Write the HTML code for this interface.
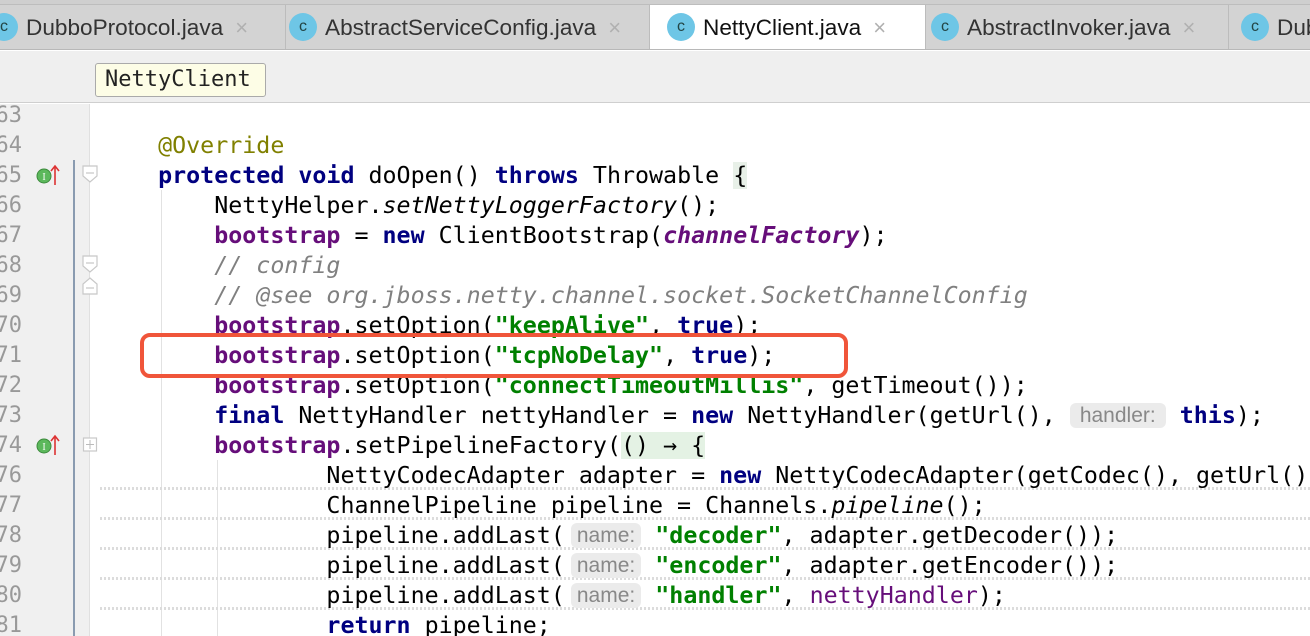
<!DOCTYPE html>
<html><head><meta charset="utf-8"><style>
*{margin:0;padding:0;box-sizing:border-box}
html,body{width:1310px;height:636px;overflow:hidden}
body{background:#fff;position:relative;font-family:"DejaVu Sans Mono","Liberation Mono",monospace}
.tabs{position:absolute;left:0;top:0;width:1310px;height:50px;background:#d3d3d3;border-bottom:1px solid #b8b8b8;overflow:hidden}
.strip{position:absolute;left:0;top:0;width:1310px;height:5px;background:#cfcfcf;border-bottom:1px solid #bdbdbd}
.tab{position:absolute;top:5px;height:45px;font-family:"Liberation Sans",sans-serif;font-size:22.6px;color:#333;line-height:45px;border-right:1px solid #bcbcbc;white-space:nowrap;overflow:hidden}
.tab.act{background:#fff;color:#111}
.ci{display:inline-block;width:28px;height:28px;border-radius:50%;background:#6ec6e6;color:#244;font-size:16px;line-height:28px;text-align:center;vertical-align:middle;margin-right:8px;position:relative;top:-2px}
.x{color:#b0b0b0;margin-left:12px;font-size:22px}
.bc{position:absolute;left:0;top:51px;width:1310px;height:52px;background:#efefef;border-bottom:1px solid #cfcfcf}
.tip{position:absolute;left:95px;top:63px;width:171px;height:34px;background:#fdfde6;border:1px solid #aaa;border-radius:3px;font-size:22px;line-height:32px;padding-left:9px;color:#222}
.gut{position:absolute;left:0;top:104px;width:90px;height:532px;background:#f0f0f0;border-right:1px solid #e0e0e0}
.ln{position:absolute;left:-20px;width:42px;text-align:right;font-size:22px;color:#999;height:30px;line-height:30px}
.code{position:absolute;left:102px;height:30px;line-height:32px;font-size:23.3px;white-space:pre;color:#000;width:1208px;overflow:hidden}
.k{color:#000080;font-weight:bold}
.f{color:#660e7a;font-weight:bold}
.fi{color:#660e7a;font-weight:bold;font-style:italic}
.s{color:#008000;font-weight:bold}
.c{color:#808080;font-style:italic}
.a{color:#808000}
.i{font-style:italic}
.h{display:inline-block;background:#ebebeb;color:#888;font-family:"Liberation Sans",sans-serif;font-size:21px;line-height:25px;height:25px;border-radius:6px;padding:0 4px;vertical-align:1px}
.wv{position:absolute;left:100px;width:1210px;height:3px;background:repeating-linear-gradient(90deg,#dcdcdc 0 2px,transparent 2px 4px)}
.g{position:absolute;width:1px;background:#e2e2e2}
</style></head><body>
<div class="tabs"><div class="strip"></div>
<div class="tab" style="left:-10px;width:296px;padding-left:0"><span class="ci">c</span>DubboProtocol.java<span class="x">×</span></div>
<div class="tab" style="left:286px;width:364px;padding-left:3px"><span class="ci">c</span>AbstractServiceConfig.java<span class="x">×</span></div>
<div class="tab act" style="left:650px;width:276px;padding-left:17px"><span class="ci">c</span>NettyClient.java<span class="x">×</span></div>
<div class="tab" style="left:926px;width:303px;padding-left:5px"><span class="ci">c</span>AbstractInvoker.java<span class="x">×</span></div>
<div class="tab" style="left:1229px;width:100px;padding-left:12px;border:none"><span class="ci">c</span>Dubbo</div>
</div>
<div class="bc"></div>
<div class="tip">NettyClient</div>
<div class="gut"></div>
<div style="position:absolute;left:73px;top:160px;width:2px;height:476px;background:#8a9bb0"></div>
<div class="g" style="left:161px;top:190px;height:446px"></div>
<div class="g" style="left:217px;top:460px;height:176px"></div>
<svg style="position:absolute;left:80px;top:160px" width="22" height="320"><g fill="#fff" stroke="#c8c8c8" stroke-width="1.2">
<path d="M3 6h14v10l-7 6-7-6z"/><path d="M3 96h14v10l-7 6-7-6z"/><path d="M10 118l7 6v10H3v-10z"/><rect x="3.5" y="278" width="13" height="13"/></g>
<g stroke="#bbb"><path d="M6 13h8M6 103h8M6 128h8M6 284.5h8M10 280v9"/></g></svg>
<svg style="position:absolute;left:35px;top:163px" width="30" height="24"><circle cx="9" cy="13" r="7" fill="#5cb85c" stroke="#3c8a3c"/><text x="9" y="17" font-size="10" text-anchor="middle" fill="#fff" font-family="Liberation Serif">I</text><path d="M20 22V4M16 8l4-5 4 5" stroke="#d33" stroke-width="1.6" fill="none"/></svg>
<svg style="position:absolute;left:35px;top:433px" width="30" height="24"><circle cx="9" cy="13" r="7" fill="#5cb85c" stroke="#3c8a3c"/><text x="9" y="17" font-size="10" text-anchor="middle" fill="#fff" font-family="Liberation Serif">I</text><path d="M20 22V4M16 8l4-5 4 5" stroke="#d33" stroke-width="1.6" fill="none"/></svg>

<div class="ln" style="top:101px">63</div><div class="ln" style="top:131px">64</div><div class="ln" style="top:161px">65</div><div class="ln" style="top:191px">66</div><div class="ln" style="top:221px">67</div><div class="ln" style="top:251px">68</div><div class="ln" style="top:281px">69</div><div class="ln" style="top:311px">70</div><div class="ln" style="top:341px">71</div><div class="ln" style="top:371px">72</div><div class="ln" style="top:401px">73</div><div class="ln" style="top:431px">74</div><div class="ln" style="top:461px">76</div><div class="ln" style="top:491px">77</div><div class="ln" style="top:521px">78</div><div class="ln" style="top:551px">79</div><div class="ln" style="top:581px">80</div><div class="ln" style="top:611px">81</div>

<div class="wv" style="top:487px"></div><div class="wv" style="top:517px"></div><div class="wv" style="top:547px"></div><div class="wv" style="top:577px"></div><div class="wv" style="top:607px"></div>

<div class="code" style="top:130px">    <span class="a">@Override</span></div>
<div class="code" style="top:160px">    <span class="k">protected void</span> doOpen() <span class="k">throws</span> Throwable <span style="background:#e8f0e8">{</span></div>
<div class="code" style="top:190px">        NettyHelper.<span class="i">setNettyLoggerFactory</span>();</div>
<div class="code" style="top:220px">        <span class="f">bootstrap</span> = <span class="k">new</span> ClientBootstrap(<span class="fi">channelFactory</span>);</div>
<div class="code" style="top:250px">        <span class="c">// config</span></div>
<div class="code" style="top:280px">        <span class="c">// @see org.jboss.netty.channel.socket.SocketChannelConfig</span></div>
<div class="code" style="top:310px">        <span class="f">bootstrap</span>.setOption(<span class="s">"keepAlive"</span>, <span class="k">true</span>);</div>
<div class="code" style="top:340px">        <span class="f">bootstrap</span>.setOption(<span class="s">"tcpNoDelay"</span>, <span class="k">true</span>);</div>
<div class="code" style="top:370px">        <span class="f">bootstrap</span>.setOption(<span class="s">"connectTimeoutMillis"</span>, getTimeout());</div>
<div class="code" style="top:400px">        <span class="k">final</span> NettyHandler nettyHandler = <span class="k">new</span> NettyHandler(getUrl(), <span class="h" style="padding:0 10px">handler:</span> <span class="k">this</span>);</div>
<div class="code" style="top:430px">        <span class="f">bootstrap</span>.setPipelineFactory(<span style="background:#e4f2e4">() → {</span></div>
<div class="code" style="top:460px">                NettyCodecAdapter adapter = <span class="k">new</span> NettyCodecAdapter(getCodec(), getUrl(), <span class="k">this</span>);</div>
<div class="code" style="top:490px">                ChannelPipeline pipeline = Channels.<span class="i">pipeline</span>();</div>
<div class="code" style="top:520px">                pipeline.addLast(<span class="h" style="margin-left:6px;padding:0 6px">name:</span> <span class="s">"decoder"</span>, adapter.getDecoder());</div>
<div class="code" style="top:550px">                pipeline.addLast(<span class="h" style="margin-left:6px;padding:0 6px">name:</span> <span class="s">"encoder"</span>, adapter.getEncoder());</div>
<div class="code" style="top:580px">                pipeline.addLast(<span class="h" style="margin-left:6px;padding:0 6px">name:</span> <span class="s">"handler"</span>, <span style="color:#660e7a">nettyHandler</span>);</div>
<div class="code" style="top:610px">                <span class="k">return</span> pipeline;</div>

<div style="position:absolute;left:140px;top:333px;width:708px;height:45px;border:4px solid #f0553a;border-radius:10px"></div>
</body></html>
